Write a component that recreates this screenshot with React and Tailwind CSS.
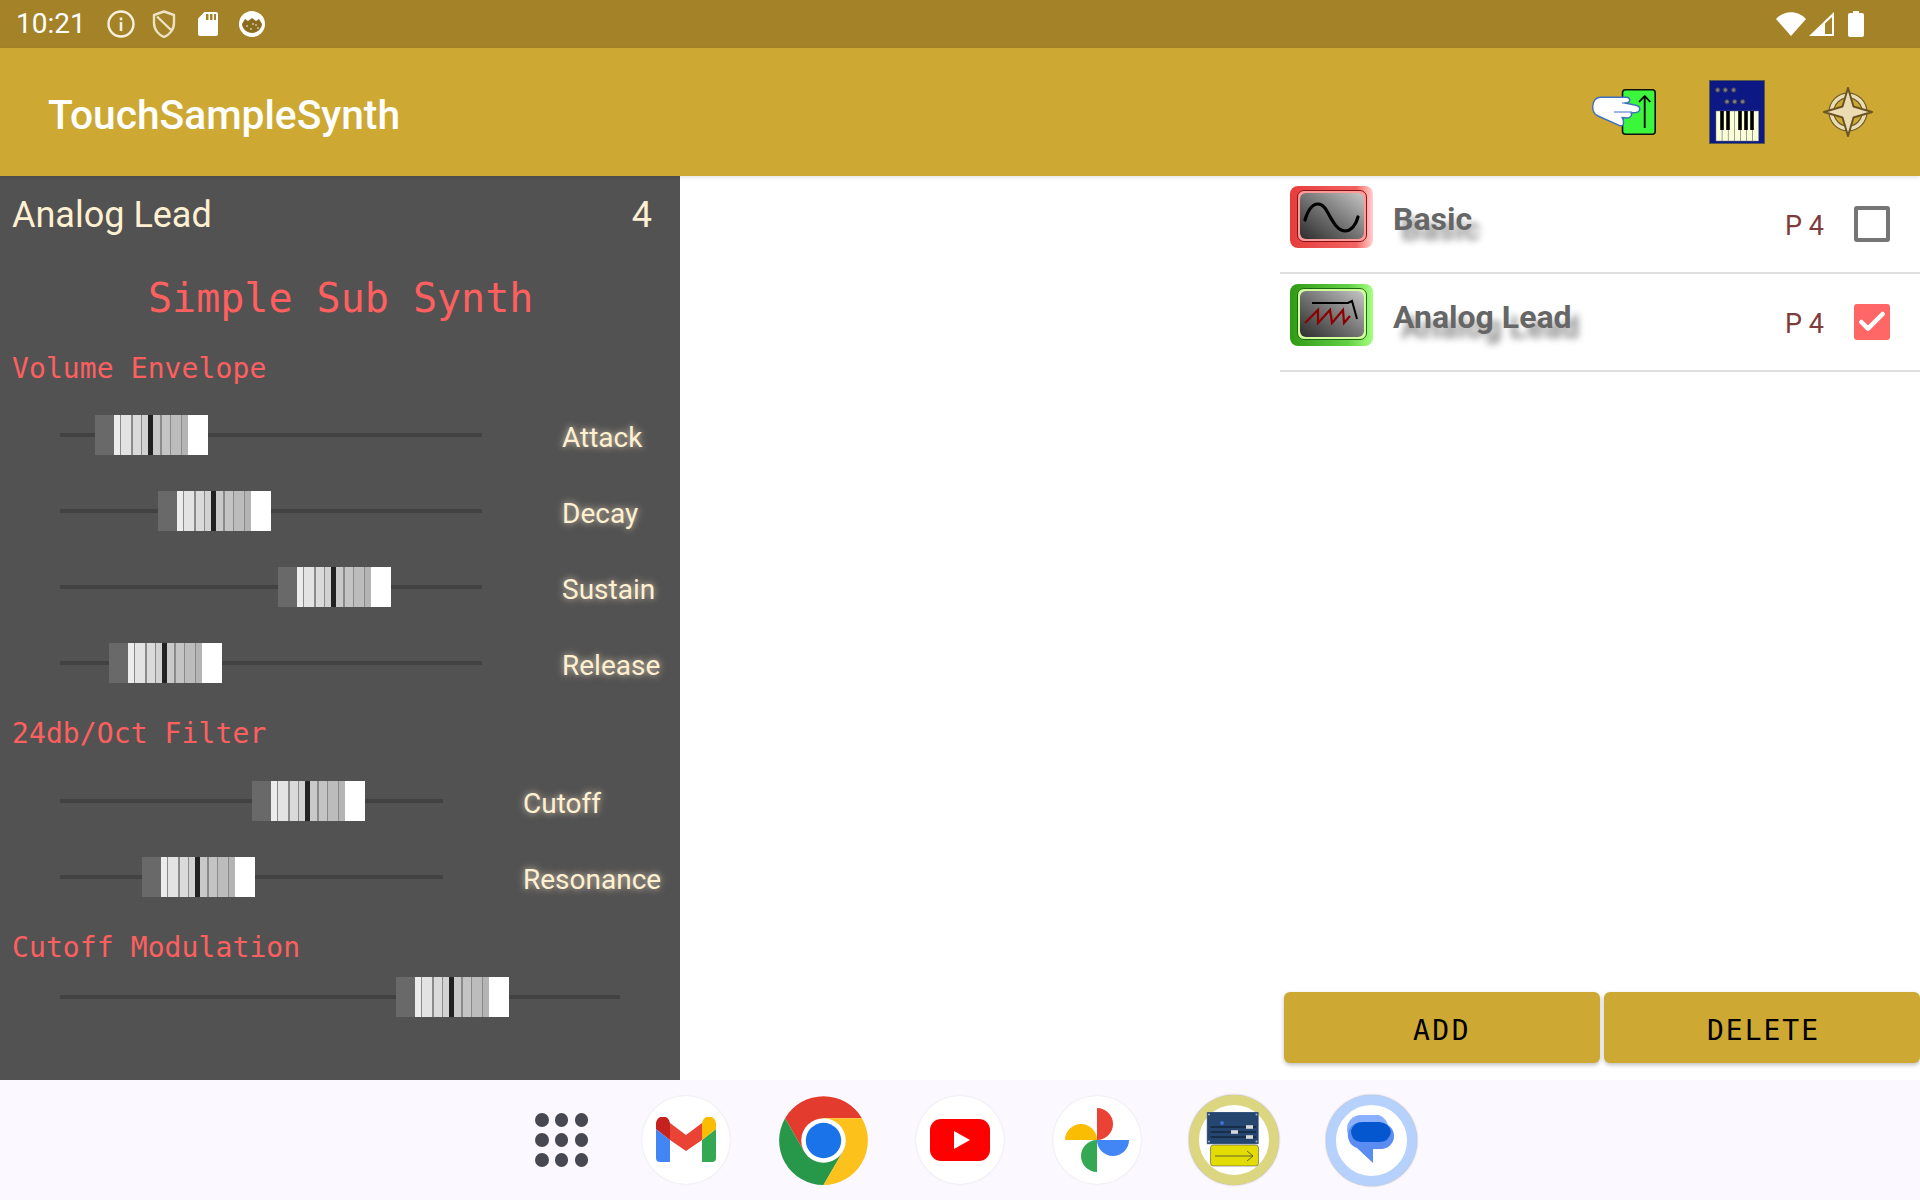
import { Check } from "lucide-react"

const ROBOTO = "font-['Roboto',sans-serif]"
const MONO = "font-['DejaVu_Sans_Mono',monospace]"

// thumb strips, left to right, as seen on the hardware fader picture
const thumbStrips = [
    ["w-[19px]", "bg-[#696969]"],
    ["w-[6px]", "bg-[#ececec]"],
    ["w-[1px]", "bg-[#8a8a8a]"],
    ["w-[10px]", "bg-[#e3e3e3]"],
    ["w-[2px]", "bg-[#8a8a8a]"],
    ["w-[8px]", "bg-[#dadada]"],
    ["w-[1px]", "bg-[#8a8a8a]"],
    ["w-[6px]", "bg-[#d2d2d2]"],
    ["w-[5px]", "bg-[#222222]"],
    ["w-[7px]", "bg-[#c9c9c9]"],
    ["w-[2px]", "bg-[#8a8a8a]"],
    ["w-[8px]", "bg-[#c4c4c4]"],
    ["w-[1px]", "bg-[#8a8a8a]"],
    ["w-[10px]", "bg-[#bcbcbc]"],
    ["w-[1px]", "bg-[#8a8a8a]"],
    ["w-[6px]", "bg-[#b4b4b4]"],
    ["w-[20px]", "bg-white"],
]

function Fader({ left, width, label, labelClass, className }) {
    return (
        <div className={`flex items-center h-[40px] pl-[60px] ${className}`}>
            <div className="relative h-[4px] bg-[#424242]" style={{ width }}>
                <div className="absolute top-[-18px] flex h-[40px] w-[113px]" style={{ left: left - 60 }}>
                    {thumbStrips.map(([w, bg], i) => <div key={i} className={`h-full ${w} ${bg}`} />)}
                </div>
            </div>
            {label && (
                <span className={`mt-[6px] text-[28px] leading-[32px] text-[#fff0d2] whitespace-nowrap [text-shadow:0_0_6px_#fff0d2a0,0_0_12px_#fff0d240] ${labelClass}`}>
                    {label}
                </span>
            )}
        </div>
    )
}

function SectionTitle({ children, className }) {
    return <div className={`${MONO} pl-[12px] text-[28px] leading-[34px] tracking-[0.1px] text-[#ff5f5f] whitespace-nowrap ${className}`}>{children}</div>
}

function LeftPanel() {
    return (
        <section className="w-[680px] h-[904px] bg-[#525252] flex flex-col shrink-0">
            <div className="flex justify-between items-center h-[78px] pl-[12px] pr-[28px] text-[36px] text-[#fff0d2]">
                <span>Analog Lead</span>
                <span>4</span>
            </div>
            <div className={`${MONO} h-[50px] mt-[19px] pl-[148px] text-[40px] leading-[50px] text-[#ff5f5f] whitespace-nowrap`}>Simple Sub Synth</div>
            <SectionTitle className="mt-[29px]">Volume Envelope</SectionTitle>
            <Fader className="mt-[29px]" left={95} width={422} label="Attack" labelClass="ml-[80px]" />
            <Fader className="mt-[36px]" left={158} width={422} label="Decay" labelClass="ml-[80px]" />
            <Fader className="mt-[36px]" left={278} width={422} label="Sustain" labelClass="ml-[80px]" />
            <Fader className="mt-[36px]" left={109} width={422} label="Release" labelClass="ml-[80px]" />
            <SectionTitle className="mt-[34px]">24db/Oct Filter</SectionTitle>
            <Fader className="mt-[30px]" left={252} width={383} label="Cutoff" labelClass="ml-[80px]" />
            <Fader className="mt-[36px]" left={142} width={383} label="Resonance" labelClass="ml-[80px]" />
            <SectionTitle className="mt-[34px]">Cutoff Modulation</SectionTitle>
            <Fader className="mt-[12px]" left={396} width={560} />
        </section>
    )
}

function WaveIcon({ tone, children }) {
    const outer = tone === "red"
        ? "bg-linear-to-r from-[#e63c3c] via-[#f26262] via-80% to-[#ffd0d0]"
        : "bg-linear-to-r from-[#2f9a14] via-[#62d044] via-70% to-[#a4ff80]"
    const ring = tone === "red" ? "bg-[#ff9a9a] border-[#8a1010]" : "bg-[#d0ff9c] border-[#1c6a10]"
    return (
        <div className={`w-[83px] h-[62px] rounded-[8px] pt-[4px] pl-[7px] shrink-0 ${outer}`}>
            <div className={`w-[70px] h-[52px] rounded-[7px] border p-[2px] ${ring}`}>
                <div className="w-full h-full rounded-[6px] bg-linear-to-tr from-[#2e2e2e] to-[#c6c6c6]">
                    <svg viewBox="0 0 64 46" className="w-full h-full">{children}</svg>
                </div>
            </div>
        </div>
    )
}

function PresetRow({ name, tone, checked, children }) {
    return (
        <div className="h-[98px] border-b-[2px] border-[#dedede] pl-[10px] pr-[30px] pt-[10px] flex items-start">
            <WaveIcon tone={tone}>{children}</WaveIcon>
            <span className="ml-[20px] mt-[14px] text-[32px] leading-[38px] font-bold text-[#666666] [text-shadow:8px_10px_7px_#00000070]">{name}</span>
            <span className="ml-auto mt-[20px] text-[27px] leading-[40px] text-[#803c3c]">P 4</span>
            {checked ? (
                <div className="ml-[30px] mt-[20px] w-[36px] h-[36px] rounded-[3px] bg-[#ff6666] flex items-center justify-center">
                    <Check className="w-[32px] h-[32px] text-white" strokeWidth={3.4} />
                </div>
            ) : (
                <div className="ml-[30px] mt-[20px] w-[36px] h-[36px] rounded-[3px] border-[4px] border-[#757575]" />
            )}
        </div>
    )
}

function RightPanel() {
    return (
        <section className="ml-auto w-[640px] h-[904px] flex flex-col">
            <PresetRow name="Basic" tone="red">
                <path d="M5 27 C8 17 12 11 18 11 C25 11 28 21 32 27 C36 34 40 38 45 38 C51 38 56 32 58 24" fill="none" stroke="#000" strokeWidth="3.2" strokeLinecap="round" />
            </PresetRow>
            <PresetRow name="Analog Lead" tone="green" checked>
                <path d="M12 12 H48 L52 10 L57 28" fill="none" stroke="#000" strokeWidth="2" />
                <path d="M5 32 L18 19 V32 L30 19 L32 32 L43 19 L44 32 L50 25" fill="none" stroke="#8e0000" strokeWidth="2.2" />
            </PresetRow>
            <div className="mt-auto mb-[17px] flex gap-[4px] pl-[4px]">
                <button className={`${MONO} w-[316px] h-[71px] pt-[6px] rounded-[6px] bg-[#cda933] text-[28px] tracking-[2.5px] text-black shadow-[0_2px_4px_#00000040]`}>ADD</button>
                <button className={`${MONO} w-[316px] h-[71px] pt-[6px] pl-[3px] rounded-[6px] bg-[#cda933] text-[28px] tracking-[2px] text-black shadow-[0_2px_4px_#00000040]`}>DELETE</button>
            </div>
        </section>
    )
}

function StatusBar() {
    return (
        <header className="h-[48px] bg-[#a38228] flex items-center text-white">
            <span className="ml-[16px] text-[28px] leading-none">10:21</span>
            <svg viewBox="0 0 28 28" className="ml-[21px] w-[28px] h-[28px]">
                <circle cx="14" cy="14" r="12.5" fill="none" stroke="#f5efdc" strokeWidth="2.4" />
                <rect x="12.7" y="12" width="2.6" height="9" fill="#f5efdc" />
                <rect x="12.7" y="7.5" width="2.6" height="2.8" fill="#f5efdc" />
            </svg>
            <svg viewBox="0 0 24 28" className="ml-[17px] w-[24px] h-[28px]">
                <path d="M12 1.5 L22 5 V13 C22 20 17 25 12 27 C7 25 2 20 2 13 V5 Z" fill="none" stroke="#ece2c4" strokeWidth="2.4" strokeLinejoin="round" />
                <path d="M5 6.5 L19 20" stroke="#ece2c4" strokeWidth="2.4" />
            </svg>
            <svg viewBox="0 0 20 24" className="ml-[22px] w-[20px] h-[24px]">
                <path d="M6.5 0 H18 A2 2 0 0 1 20 2 V22 A2 2 0 0 1 18 24 H2 A2 2 0 0 1 0 22 V6.5 Z" fill="#fff" />
                <path d="M8 2 h2.5 v6 h-2.5 z M12 2 h2.5 v6 h-2.5 z M16 2 h2 v6 h-2 z" fill="#a38228" />
            </svg>
            <svg viewBox="0 0 26 26" className="ml-[21px] w-[26px] h-[26px]">
                <circle cx="13" cy="13" r="13" fill="#fff" />
                <path d="M3 13 L6 8 L9 10 L13 7 L17 10 L20 8 L23 13 A10 9 0 0 1 3 13 Z" fill="#8a6c1e" />
                <circle cx="8" cy="15" r="0.8" fill="#fff" />
                <circle cx="12" cy="18" r="0.8" fill="#fff" />
                <circle cx="17" cy="14" r="0.8" fill="#fff" />
                <circle cx="19" cy="17" r="0.8" fill="#fff" />
                <circle cx="14" cy="13" r="0.8" fill="#fff" />
            </svg>
            <svg viewBox="0 0 30 24" className="ml-auto w-[30px] h-[24px]">
                <path d="M0 7 C8 -2 22 -2 30 7 L15 24 Z" fill="#fff" />
            </svg>
            <svg viewBox="0 0 25 24" className="ml-[3px] w-[25px] h-[24px]">
                <path d="M25 0 V24 H0 Z M23 5 L16 11.5 V22 H23 Z" fill="#fff" fillRule="evenodd" />
            </svg>
            <svg viewBox="0 0 16 26" className="ml-[14px] mr-[56px] w-[16px] h-[26px]">
                <path d="M5 0 H11 V2 H14 A2 2 0 0 1 16 4 V24 A2 2 0 0 1 14 26 H2 A2 2 0 0 1 0 24 V4 A2 2 0 0 1 2 2 H5 Z" fill="#fff" />
            </svg>
        </header>
    )
}

function HandIcon() {
    return (
        <svg viewBox="0 0 64 46" className="w-[64px] h-[46px]">
            <rect x="30.5" y="0.8" width="32.7" height="44.4" rx="3" fill="#3cf63c" stroke="#111" strokeWidth="1.6" />
            <path d="M52.7 39 V7 M47 13 L52.7 7 L58.3 13" fill="none" stroke="#000" strokeWidth="1.8" />
            <path d="M8 8.3 H35 Q38 9 37.7 11.7 Q37 14 33 14 L42.7 16 Q48 17 47.7 20 Q47.5 23 44 23.5 L39 24 Q40 26 39 27 Q38 29 35 29 L30 28.5 Q32.5 32 31 36 Q30 37 27.7 36.7 L6 27 Q0 24 0.8 17 Q1.5 9 8 8.3 Z" fill="#fff" stroke="#3f6fc0" strokeWidth="1.4" strokeLinejoin="round" />
            <path d="M30 14 H34 M22 23 H40" stroke="#3f6fc0" strokeWidth="1.1" />
        </svg>
    )
}

function KeyboardIcon() {
    const knobs = [[8.7, 10], [16.3, 10], [24.7, 10], [18, 21.7], [25.7, 21.7], [33.7, 21.7]]
    const whites = [7, 13.1, 19.2, 25.3, 31.4, 37.5, 43.6]
    const blacks = [13, 19, 31, 37, 43]
    return (
        <svg viewBox="0 0 56 64" className="w-[56px] h-[64px]">
            <rect x="0.5" y="0.5" width="55" height="63" fill="#0c1884" stroke="#5b5b4a" />
            {knobs.map(([x, y]) => <circle key={x} cx={x} cy={y} r="2.2" fill="#7c7c7c" stroke="#3a3a5a" />)}
            {whites.map((x) => <rect key={x} x={x} y="31" width="6.1" height="30" fill="#fbffd8" stroke="#777" strokeWidth="0.5" />)}
            {blacks.map((x) => <rect key={x} x={x - 1.8} y="31" width="3.6" height="19" fill="#000" />)}
        </svg>
    )
}

function CompassIcon() {
    return (
        <svg viewBox="0 0 50 50" className="w-[50px] h-[50px]">
            <circle cx="25" cy="25" r="16.5" fill="none" stroke="#6f5a2a" strokeWidth="6" />
            <circle cx="25" cy="25" r="16.5" fill="none" stroke="#ecdcb4" strokeWidth="3.6" />
            <path d="M25 1 L30.5 19.5 L49 25 L30.5 30.5 L25 49 L19.5 30.5 L1 25 L19.5 19.5 Z" fill="#ecdcb4" stroke="#6a5526" strokeWidth="2" strokeLinejoin="round" />
        </svg>
    )
}

function AppBar() {
    return (
        <div className="h-[128px] bg-[#cda933] flex items-center relative z-10 shadow-[0_2px_4px_#00000018]">
            <span className="ml-[48px] pt-[7px] text-[40.7px] font-medium text-white">TouchSampleSynth</span>
            <div className="ml-auto flex items-center">
                <HandIcon />
                <div className="ml-[53px]"><KeyboardIcon /></div>
                <div className="ml-[58px] mr-[47px]"><CompassIcon /></div>
            </div>
        </div>
    )
}

function DockCircle({ children }) {
    return <div className="w-[88px] h-[88px] rounded-full bg-white shadow-[0_0_2px_#00000022] flex items-center justify-center shrink-0 overflow-hidden">{children}</div>
}

function DockSlot({ children }) {
    return <div className="w-[88px] h-[88px] flex items-center justify-center shrink-0">{children}</div>
}

function Dock() {
    return (
        <footer className="h-[120px] bg-[#fbf8ff] flex items-center pl-[535px]">
            <div className="grid grid-cols-3 gap-[6.5px] w-[53px] shrink-0 mr-[54px]">
                {Array.from({ length: 9 }).map((_, i) => <div key={i} className="w-[13.5px] h-[13.5px] rounded-full bg-[#484852]" />)}
            </div>
            <div className="flex gap-[49px] items-center">
                <DockSlot>
                    <DockCircle>
                        <svg viewBox="0 0 60 46" className="w-[60px] h-[46px]">
                            <path d="M0 12 L14 23 V45 H4 A4 4 0 0 1 0 41 Z" fill="#4285f4" />
                            <path d="M60 12 L46 23 V45 H56 A4 4 0 0 0 60 41 Z" fill="#34a853" />
                            <path d="M46 6 A7 7 0 0 1 60 7 V12 L46 23 Z" fill="#fbbc04" />
                            <path d="M14 6 L30 18 L46 6 V23 L30 34 L14 23 Z" fill="#ea4335" />
                            <path d="M0 7 A7 7 0 0 1 14 6 V23 L0 12 Z" fill="#c5221f" />
                        </svg>
                    </DockCircle>
                </DockSlot>
                <DockSlot>
                    <svg viewBox="0 0 88 88" className="w-[89px] h-[89px] shrink-0">
                        <path d="M82 22 A44 44 0 0 0 6 22 L25 55 L44 44 L44 22 Z" fill="#e33b2e" />
                        <path d="M6 22 A44 44 0 0 0 44 88 L63 55 L44 44 L25 55 Z" fill="#27984a" />
                        <path d="M44 88 A44 44 0 0 0 82 22 H44 L44 44 L63 55 Z" fill="#fcc11a" />
                        <circle cx="44" cy="44" r="22" fill="#fff" />
                        <circle cx="44" cy="44" r="17.5" fill="#1a73e8" />
                    </svg>
                </DockSlot>
                <DockSlot>
                    <DockCircle>
                        <svg viewBox="0 0 60 42" className="w-[60px] h-[42px]">
                            <rect width="60" height="42" rx="11" fill="#ff0000" />
                            <path d="M24 12 L40 21 L24 30 Z" fill="#fff" />
                        </svg>
                    </DockCircle>
                </DockSlot>
                <DockSlot>
                    <DockCircle>
                        <svg viewBox="0 0 64 64" className="w-[64px] h-[64px]">
                            <path d="M32 32 V0 A16 16 0 0 1 32 32 Z" fill="#ea4335" />
                            <path d="M32 32 H64 A16 16 0 0 1 32 32 Z" fill="#4285f4" />
                            <path d="M32 32 V64 A16 16 0 0 1 32 32 Z" fill="#34a853" />
                            <path d="M32 32 H0 A16 16 0 0 1 32 32 Z" fill="#fbbc04" />
                        </svg>
                    </DockCircle>
                </DockSlot>
                <DockSlot>
                    <div className="w-[90px] h-[90px] rounded-full bg-white border-[10px] border-[#dcd680] shadow-[0_0_2px_#00000066] shrink-0 flex items-center justify-center">
                        <svg viewBox="0 0 56 56" className="w-[56px] h-[56px] shrink-0">
                            <rect x="1" y="0" width="51.5" height="32" fill="#24466f" stroke="#6a84a4" strokeWidth="0.5" />
                            <circle cx="16" cy="11" r="2" fill="#3f6fd8" />
                            <circle cx="3" cy="2.5" r="1" fill="#a8b4c4" />
                            <circle cx="50.5" cy="2.5" r="1" fill="#a8b4c4" />
                            <circle cx="3" cy="29.5" r="1" fill="#a8b4c4" />
                            <circle cx="50.5" cy="29.5" r="1" fill="#a8b4c4" />
                            <path d="M4.5 15 H50 M4.5 20 H50 M4.5 25 H50" stroke="#0a1624" strokeWidth="1" />
                            <rect x="40" y="13.2" width="7" height="3.6" fill="#d8d8d8" />
                            <rect x="25" y="18.2" width="7" height="3.6" fill="#d8d8d8" />
                            <rect x="40" y="23.2" width="7" height="3.6" fill="#d8d8d8" />
                            <rect x="4.5" y="33" width="48" height="21" rx="3" fill="#e3dc00" stroke="#555" strokeWidth="0.6" />
                            <path d="M9 44 H47 M41 39 L47 44 L41 49" fill="none" stroke="#444" strokeWidth="0.8" />
                        </svg>
                    </div>
                </DockSlot>
                <DockSlot>
                    <div className="w-[91px] h-[91px] rounded-full bg-white border-[10px] border-[#b6d2fc] shadow-[0_0_2px_#00000066] shrink-0 flex items-center justify-center">
                        <svg viewBox="0 0 48 50" className="w-[48px] h-[50px] shrink-0">
                            <path d="M14 0 H32 A15 15 0 0 1 32 28 H14 A14 14 0 0 1 14 0 Z" fill="#8ab0ff" />
                            <path d="M18 8 H34 A13 13 0 0 1 34 34 H26 V48 L10 33 A13 13 0 0 1 18 8 Z" fill="#5a8cf2" />
                            <path d="M16 7 H32 A12 12 0 0 1 44 17 Q42 27 32 27 H14 Q4 26 4 16 Q6 7 16 7 Z" fill="#0557cf" />
                        </svg>
                    </div>
                </DockSlot>
            </div>
        </footer>
    )
}

export default function App() {
    return (
        <div className={`${ROBOTO} w-[1920px] h-[1200px] bg-white overflow-hidden flex flex-col`}>
            <StatusBar />
            <AppBar />
            <main className="flex h-[904px]">
                <LeftPanel />
                <RightPanel />
            </main>
            <Dock />
        </div>
    )
}
